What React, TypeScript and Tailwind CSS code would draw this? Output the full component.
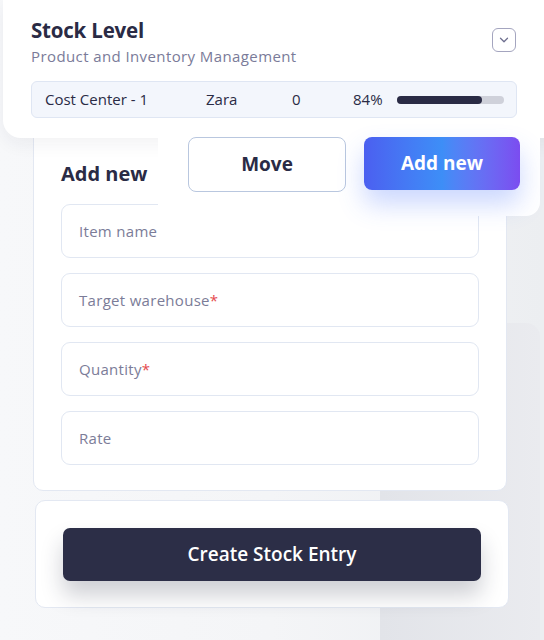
import { ChevronDown } from 'lucide-react';

const fields = [
    { label: 'Item name', required: false },
    { label: 'Target warehouse', required: true },
    { label: 'Quantity', required: true },
    { label: 'Rate', required: false },
];

export default function App() {
    return (
        <div
            className="relative w-[544px] h-[640px] overflow-hidden bg-gradient-to-r from-[#f7f8fa] via-[#f4f5f7] to-[#eceef1] text-[#2a2b45]"
            style={{ fontFamily: '"Open Sans", "Liberation Sans", sans-serif' }}
        >
            {/* grey panel behind the cards */}
            <div className="absolute left-[380px] top-[323px] w-[160px] h-[330px] rounded-[14px] bg-gradient-to-r from-[#e2e4e9] to-[#eaebef]" />

            {/* Top card */}
            <div className="relative z-20 ml-[3px] w-[560px] h-[138px] rounded-bl-[18px] bg-white shadow-[0_6px_18px_rgba(30,40,70,0.06)] pl-[28px] pr-[47px] pt-[16px]">
                <div className="flex items-start justify-between">
                    <div>
                        <h1 className="text-[20.5px] font-bold leading-[28px] tracking-[-0.2px]">Stock Level</h1>
                        <p className="text-[15px] leading-[24px] tracking-[0.4px] text-[#7a7b99]">Product and Inventory Management</p>
                    </div>
                    <button className="mt-[12px] flex h-[24px] w-[24px] items-center justify-center rounded-[6px] border-[1.5px] border-[#a4a5bf] text-[#6f7090]">
                        <ChevronDown size={14} strokeWidth={2.2} />
                    </button>
                </div>
                <div className="mt-[13px] flex h-[37px] w-[486px] items-center rounded-[6px] border border-[#dfe6f3] bg-[#f3f6fc] pl-[13px] pr-[12px] text-[15px]">
                    <span className="w-[161px]">Cost Center - 1</span>
                    <span className="w-[86px]">Zara</span>
                    <span className="w-[61px]">0</span>
                    <span className="w-[44px]">84%</span>
                    <div className="h-[8px] flex-1 rounded-full bg-[#cfd1da]">
                        <div className="h-full rounded-full bg-[#2a2b45]" style={{ width: '79%' }} />
                    </div>
                </div>
            </div>

            {/* floating action panel */}
            <div className="absolute left-[158px] top-[120px] z-30 flex h-[96px] w-[382px] gap-[18px] rounded-br-[14px] bg-white pl-[30px] pt-[17px]">
                <button className="h-[55px] w-[158px] rounded-[8px] border border-[#b9c7df] bg-white text-[19px] font-bold">
                    Move
                </button>
                <button className="h-[53px] w-[156px] rounded-[8px] bg-gradient-to-r from-[#4b5ff0] via-[#3d8ef7] to-[#7b4cf0] text-[19px] font-bold text-white shadow-[0_14px_26px_rgba(70,110,250,0.28)]">
                    Add new
                </button>
            </div>

            {/* Form card */}
            <div className="relative z-10 ml-[33px] mt-[-20px] w-[474px] rounded-[10px] border border-[#e3e8f2] bg-white px-[27px] pb-[25px] pt-[41px]">
                <h2 className="text-[20px] font-bold leading-[28px]">Add new</h2>
                <div className="mt-[16px] flex flex-col gap-[15px]">
                    {fields.map((f) => (
                        <div
                            key={f.label}
                            className="flex h-[54px] items-center rounded-[9px] border border-[#e1e7f2] bg-white pl-[17px] text-[15px] tracking-[0.3px] text-[#7b7c98]"
                        >
                            {f.label}
                            {f.required && <span className="text-[#e5484d]">*</span>}
                        </div>
                    ))}
                </div>
            </div>

            {/* Bottom card */}
            <div className="relative z-10 ml-[35px] mt-[9px] w-[474px] rounded-[10px] border border-[#e3e8f2] bg-white px-[27px] pb-[26px] pt-[27px]">
                <button className="h-[53px] w-full rounded-[7px] bg-[#2c2e47] text-[19px] font-semibold text-white shadow-[0_14px_22px_rgba(30,35,60,0.22)]">
                    Create Stock Entry
                </button>
            </div>
        </div>
    );
}
